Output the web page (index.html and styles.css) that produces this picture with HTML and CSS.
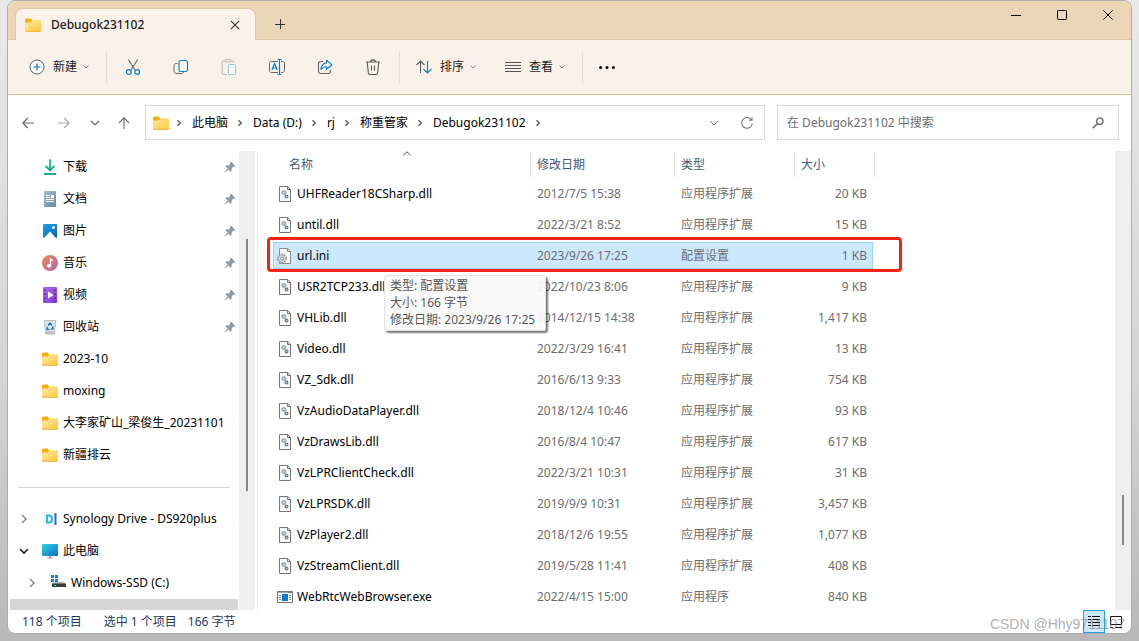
FILE: index.html
```html
<!DOCTYPE html>
<html lang="zh-CN">
<head>
<meta charset="utf-8">
<title>Debugok231102</title>
<link rel="stylesheet" href="styles.css">
</head>
<body>
<svg class="defs" aria-hidden="true">
  <defs>
    <linearGradient id="gFolder" x1="0" y1="0" x2="1" y2="1"><stop offset="0" stop-color="#ffe9a2"/><stop offset="1" stop-color="#ffc93f"/></linearGradient>
    <linearGradient id="gDown" x1="0" y1="0" x2="0" y2="1"><stop offset="0" stop-color="#35c887"/><stop offset="1" stop-color="#0f9f94"/></linearGradient>
    <linearGradient id="gDoc" x1="0" y1="0" x2="1" y2="1"><stop offset="0" stop-color="#a9bfd3"/><stop offset="1" stop-color="#68869f"/></linearGradient>
    <linearGradient id="gPic" x1="0" y1="0" x2="1" y2="1"><stop offset="0" stop-color="#16a3ea"/><stop offset="1" stop-color="#0a60b8"/></linearGradient>
    <linearGradient id="gMusic" x1="0" y1="0" x2="1" y2="1"><stop offset="0" stop-color="#ef8a57"/><stop offset="1" stop-color="#b562a6"/></linearGradient>
    <linearGradient id="gVideo" x1="0" y1="0" x2="1" y2="1"><stop offset="0" stop-color="#b06bf2"/><stop offset="1" stop-color="#8437dd"/></linearGradient>
    <linearGradient id="gPc" x1="0" y1="0" x2="1" y2="1"><stop offset="0" stop-color="#35d3e6"/><stop offset="1" stop-color="#0b6fc0"/></linearGradient>
  </defs>
  <symbol id="folder" viewBox="0 0 16 16"><path d="M0 3.200C0 2.200.6 1.500 1.500 1.500H5.500L7.500 3.500V6H0z" fill="#f5ab0c"/><path d="M0 5.500H5.300L7.200 3.300H15C15.700 3.300 16 3.700 16 4.300V13.200C16 14 15.600 14.500 14.800 14.500H1.200C.4 14.500 0 14 0 13.200z" fill="url(#gFolder)"/><path d="M.2 13.600Q.4 14.300 1.200 14.300H14.800Q15.600 14.300 15.800 13.600" fill="none" stroke="#e9a31c" stroke-width=".8"/></symbol>
  <symbol id="dll" viewBox="0 0 16 16"><path d="M2.500.5H10.500L13.500 3.500V15.500H2.500z" fill="#fafafa" stroke="#767676"/><path d="M10.500.5V3.500H13.500" fill="none" stroke="#767676"/><circle cx="6.800" cy="6.500" r="1.700" fill="#dfe5e9" stroke="#a3b0ba" stroke-width="1.800"/><circle cx="9.500" cy="10.500" r="1.300" fill="#fafafa" stroke="#71808c" stroke-width="1.500"/></symbol>
  <symbol id="ini" viewBox="0 0 16 16"><path d="M2.500.5H10.500L13.500 3.500V15.500H2.500z" fill="#f6f8fa" stroke="#8a8a8a"/><path d="M10.500.5V3.500H13.500" fill="none" stroke="#8a8a8a"/><circle cx="5" cy="10.500" r="4.300" fill="#e3e6e8" stroke="#8d9296" stroke-width="1.500" stroke-dasharray="1.700 1"/><circle cx="5" cy="10.500" r="3.400" fill="#dfe3e6" stroke="#9aa0a4" stroke-width=".7"/><circle cx="5" cy="10.500" r="1.500" fill="#fff" stroke="#858a8e"/></symbol>
  <symbol id="exe" viewBox="0 0 16 16"><path d="M.5 2.500H15.500V13.500H.5z" fill="#fff" stroke="#757575"/><path d="M1 3.500H15" stroke="#aaa"/><path d="M11.500 3.500H12.500M13.500 3.500H14.500" stroke="#444"/><path d="M5 5H11V12H5z" fill="#0a79d0"/><path d="M2 6.500H4M2 8.500H4M2 10.500H4M12 6.500H14M12 8.500H14M12 10.500H14" stroke="#8a9299"/></symbol>
  <symbol id="pin" viewBox="0 0 12 12"><path d="M7 .6 11.400 5 10.500 5.900 9.500 5.500 7.600 7.400 7.700 9.800 6.800 10.700 4.400 8.400 1 11.500.5 11 3.600 7.600 1.300 5.200 2.200 4.300 4.600 4.400 6.500 2.500 6.100 1.500z" fill="#8d9aa3"/></symbol>
  <symbol id="cd" viewBox="0 0 8 8"><path d="M1.500 2.500 4 5 6.500 2.500" fill="none" stroke="#8c867e"/></symbol>
  <symbol id="cr" viewBox="0 0 8 8"><path d="M2.500 1.200 5.300 4 2.500 6.800" fill="none" stroke="#5b5b5b" stroke-width="1.400"/></symbol>
  <symbol id="tree" viewBox="0 0 10 10"><path d="M3 1 7 5 3 9" fill="none" stroke="#8b8b8b" stroke-width="1.500"/></symbol>
</svg>

<div class="window">
  <header class="titlebar">
    <div class="tab">
      <svg class="i16"><use href="#folder"/></svg>
      <span class="tab-name">Debugok231102</span>
      <button class="plain" aria-label="关闭标签页"><svg class="i10" viewBox="0 0 10 10"><path d="M.8.8 9.200 9.200M9.200.8.8 9.200" stroke="#333" stroke-width="1.100"/></svg></button>
    </div>
    <button class="plain newtab" aria-label="新建标签页"><svg class="i10" viewBox="0 0 10 10"><path d="M0 5.500H10M5.500 0V10" stroke="#333"/></svg></button>
    <div class="winbtns">
      <button class="plain" aria-label="最小化"><svg class="i10" viewBox="0 0 10 10"><path d="M0 5.500H10" stroke="#000"/></svg></button>
      <button class="plain" aria-label="最大化"><svg class="i10" viewBox="0 0 10 10"><rect x=".5" y=".5" width="9" height="9" rx=".8" fill="none" stroke="#000"/></svg></button>
      <button class="plain" aria-label="关闭"><svg class="i10" viewBox="0 0 10 10"><path d="M.3.3 9.700 9.700M9.700.3.3 9.700" stroke="#000"/></svg></button>
    </div>
  </header>

  <div class="toolbar">
    <button class="tool"><svg class="i16" viewBox="0 0 16 16"><circle cx="8" cy="8" r="7" fill="#fcfaf7" stroke="#5a6068"/><path d="M4.500 8H11.500M8 4.500V11.500" stroke="#0a7bd4" stroke-width="1.200"/></svg>新建<svg class="i8"><use href="#cd"/></svg></button>
    <span class="sep"></span>
    <div class="icons">
      <button class="plain" aria-label="剪切"><svg class="i16" viewBox="0 0 16 16"><path d="M3.300.5 10 11M12.700.5 6 11" fill="none" stroke="#666" stroke-width="1.100"/><circle cx="3.800" cy="13" r="2.400" fill="none" stroke="#0a7bd4" stroke-width="1.200"/><circle cx="12.200" cy="13" r="2.400" fill="none" stroke="#0a7bd4" stroke-width="1.200"/></svg></button>
      <button class="plain" aria-label="复制"><svg class="i16" viewBox="0 0 16 16"><path d="M4.500 4.500H3C1.800 4.500 1 5.300 1 6.500V12C1 13.800 2.200 14.500 4 14.500H8.500C10 14.500 10.500 13.800 10.700 12.800" fill="none" stroke="#666"/><rect x="6" y="1.500" width="8.500" height="11" rx="1.800" fill="#fcfaf7" stroke="#0a7bd4" stroke-width="1.200"/></svg></button>
      <button class="plain" aria-label="粘贴"><svg class="i16" viewBox="0 0 16 16"><path d="M5 2H2.500C1.700 2 1.200 2.500 1.200 3.300V14C1.200 14.900 1.700 15.500 2.500 15.500H6M10 2H12C12.700 2 13 2.600 13 3.500" fill="none" stroke="#b9b5b0"/><rect x="4.500" y=".6" width="5.500" height="2.500" rx="1.200" fill="none" stroke="#b9b5b0"/><rect x="7.500" y="5.500" width="7" height="10" rx="1" fill="#fcfaf7" stroke="#92c2e6"/></svg></button>
      <button class="plain" aria-label="重命名"><svg class="i16" viewBox="0 0 16 16"><path d="M9 2.500H2.500C1.200 2.500.5 3.200.5 4.500V11.500C.5 12.800 1.200 13.500 2.500 13.500H9M12 2.500H13.500C14.800 2.500 15.500 3.200 15.500 4.500V11.500C15.500 12.800 14.800 13.500 13.500 13.500H12" fill="none" stroke="#666"/><path d="M8.500.5H12.500M8.500 15.500H12.500M10.500.5V15.500M3 11 5.600 4.500 8.200 11M3.900 9H7.300" fill="none" stroke="#0a7bd4" stroke-width="1.200"/></svg></button>
      <button class="plain" aria-label="共享"><svg class="i16" viewBox="0 0 16 16"><path d="M6 2.500H4C2.200 2.500 1.500 3.500 1.500 5V12C1.500 13.800 2.500 14.500 4 14.500H11C12.800 14.500 13.500 13.500 13.500 12V11" fill="none" stroke="#666" stroke-width="1.100"/><path d="M9.500 1.200 15 5.800 9.500 10.300V7.800C7 7.700 5.300 8.800 4 10.500 4.300 6.800 6.500 4.300 9.500 3.900z" fill="#fcfaf7" stroke="#0a7bd4" stroke-width="1.100" stroke-linejoin="round"/></svg></button>
      <button class="plain" aria-label="删除"><svg class="i16" viewBox="0 0 16 16"><path d="M.8 3H15.200M5.500 3C5.500.2 10.500.2 10.500 3M2.200 3.200 3.400 14C3.500 15 4.200 15.500 5 15.500H11C11.800 15.500 12.500 15 12.600 14L13.800 3.200M6.500 6.500V11.500M9.500 6.500V11.500" fill="none" stroke="#5a5a5a" stroke-width="1.100"/></svg></button>
    </div>
    <span class="sep"></span>
    <button class="tool"><svg class="i16" viewBox="0 0 16 16"><path d="M4.500 14V2.200M.5 6 4.500 2 8.500 6" fill="none" stroke="#5a5a5a" stroke-width="1.100"/><path d="M11.500 2V13.800M7.500 10 11.500 14 15.500 10" fill="none" stroke="#0a7bd4" stroke-width="1.100"/></svg>排序<svg class="i8"><use href="#cd"/></svg></button>
    <button class="tool"><svg class="i16" viewBox="0 0 16 16"><path d="M0 3.500H16M0 6.500H16M0 9.500H16M0 12.500H16" stroke="#555"/></svg>查看<svg class="i8"><use href="#cd"/></svg></button>
    <span class="sep"></span>
    <button class="plain more" aria-label="更多"><svg class="i16" viewBox="0 0 16 16"><circle cx="1.600" cy="8.500" r="1.500"/><circle cx="8" cy="8.500" r="1.500"/><circle cx="14.400" cy="8.500" r="1.500"/></svg></button>
  </div>

  <div class="navrow">
    <div class="arrows">
      <button class="plain" aria-label="后退"><svg viewBox="0 0 12 12"><path d="M12 6H.8M5.800 1 .8 6 5.800 11" fill="none" stroke="#666" stroke-width="1.100"/></svg></button>
      <button class="plain" aria-label="前进"><svg viewBox="0 0 12 12"><path d="M0 6H11.200M6.200 1 11.200 6 6.200 11" fill="none" stroke="#a5a5a5" stroke-width="1.100"/></svg></button>
      <button class="plain" aria-label="最近位置"><svg viewBox="0 0 12 12"><path d="M2 4 6 8 10 4" fill="none" stroke="#666" stroke-width="1.200"/></svg></button>
      <button class="plain" aria-label="向上"><svg viewBox="0 0 12 12"><path d="M6 12V.8M1 5.800 6 .8 11 5.800" fill="none" stroke="#666" stroke-width="1.100"/></svg></button>
    </div>
    <nav class="address">
      <svg class="i16"><use href="#folder"/></svg><svg class="i8"><use href="#cr"/></svg>
      <a href="#">此电脑</a><svg class="i8"><use href="#cr"/></svg>
      <a href="#">Data (D:)</a><svg class="i8"><use href="#cr"/></svg>
      <a href="#">rj</a><svg class="i8"><use href="#cr"/></svg>
      <a href="#">称重管家</a><svg class="i8"><use href="#cr"/></svg>
      <a href="#">Debugok231102</a><svg class="i8"><use href="#cr"/></svg>
      <button class="plain drop" aria-label="历史"><svg viewBox="0 0 12 12"><path d="M2 4 6 8 10 4" fill="none" stroke="#777"/></svg></button>
      <button class="plain refresh" aria-label="刷新"><svg viewBox="0 0 12 12"><path d="M10.500 3A5.300 5.300 0 1 0 11.300 6.500M11 .2V3.300H7.900" fill="none" stroke="#777" stroke-width="1.100"/></svg></button>
    </nav>
    <label class="search">
      <input type="text" placeholder="在 Debugok231102 中搜索" aria-label="搜索">
      <svg viewBox="0 0 12 12"><circle cx="7.800" cy="4.200" r="3.200" fill="none" stroke="#777" stroke-width="1.500"/><path d="M5.400 6.600.8 11.200" stroke="#777" stroke-width="1.800"/></svg>
    </label>
  </div>

  <div class="content">
    <aside class="side">
      <ul class="tree">
        <li><svg class="i16" viewBox="0 0 16 16"><path d="M8 .5V11M3.500 7 8 11.200 12.500 7" fill="none" stroke="url(#gDown)" stroke-width="1.800"/><path d="M7.200.5H8.800V10H7.200z" fill="#2fbf8a"/><path d="M2 14H14V16H2z" fill="#18aa8f"/></svg><span>下载</span><svg class="pin"><use href="#pin"/></svg></li>
        <li><svg class="i16" viewBox="0 0 16 16"><rect x="2" width="12" height="16" rx="1" fill="url(#gDoc)"/><path d="M4 4.500H8M4 6.500H8M4 8.500H12M4 10.500H12" stroke="#fff"/><path d="M9 4H12V7H9z" fill="#fff"/></svg><span>文档</span><svg class="pin"><use href="#pin"/></svg></li>
        <li><svg class="i16" viewBox="0 0 16 16"><rect x="1" y="1" width="14" height="14" rx="1" fill="url(#gPic)"/><path d="M2 15 8 8.500 14 15z" fill="#fff"/><circle cx="11.500" cy="4.500" r="1.500" fill="#fff"/></svg><span>图片</span><svg class="pin"><use href="#pin"/></svg></li>
        <li><svg class="i16" viewBox="0 0 16 16"><circle cx="8" cy="8" r="8" fill="url(#gMusic)"/><circle cx="7" cy="10.800" r="2" fill="#fff"/><path d="M8.500 11V4L11 5.500" fill="none" stroke="#fff" stroke-width="1.400"/></svg><span>音乐</span><svg class="pin"><use href="#pin"/></svg></li>
        <li><svg class="i16" viewBox="0 0 16 16"><rect x="1" y="0" width="14" height="16" rx="1" fill="url(#gVideo)"/><path d="M6 4.500 11.500 8 6 11.500z" fill="#fff"/><path d="M3 2.500V15M13 2.500V15" stroke="#43207d" stroke-width="1.500" stroke-dasharray="1.500 2.500"/></svg><span>视频</span><svg class="pin"><use href="#pin"/></svg></li>
        <li><svg class="i16" viewBox="0 0 16 16"><path d="M2.300 1.500H13.700L12.300 15H3.700z" fill="#e3e6e8" stroke="#b9bec2"/><path d="M3.500 12.500H12.500L12.200 15H3.800z" fill="#b9bcbf"/><path d="M6 6.500 8 4.200 10 6.500M10.500 7.500 11 9.500 8.800 10.500M7.300 10.500H5L5.400 7.800" fill="none" stroke="#0a7bd4" stroke-width="1.500"/></svg><span>回收站</span><svg class="pin"><use href="#pin"/></svg></li>
        <li><svg class="i16"><use href="#folder"/></svg><span>2023-10</span></li>
        <li><svg class="i16"><use href="#folder"/></svg><span>moxing</span></li>
        <li><svg class="i16"><use href="#folder"/></svg><span>大李家矿山_梁俊生_20231101</span></li>
        <li><svg class="i16"><use href="#folder"/></svg><span>新疆排云</span></li>
      </ul>
      <hr>
      <ul class="tree drives">
        <li><svg class="exp"><use href="#tree"/></svg><svg class="i16" viewBox="0 0 16 16"><path d="M1 1H13V15H1z" fill="#f3f5f8"/><path d="M5 4.500H7C11 4.500 11 11.500 7 11.500H5z" fill="none" stroke="#24b8e8" stroke-width="2"/><path d="M13.500 2V14" stroke="#2b6bd0" stroke-width="2"/></svg><span>Synology Drive - DS920plus</span></li>
        <li><svg class="exp" viewBox="0 0 10 10"><path d="M1 3 5 7 9 3" fill="none" stroke="#222" stroke-width="1.600"/></svg><svg class="i16" viewBox="0 0 16 16"><rect y="1" width="16" height="12" rx="1" fill="url(#gPc)"/><path d="M7 13H9V14.500H11V15.500H5V14.500H7z" fill="#9aa5ad"/></svg><span>此电脑</span></li>
        <li class="child"><svg class="exp"><use href="#tree"/></svg><svg class="i16" viewBox="0 0 16 16"><path d="M1 0H4V3H1zM5 0H8V3H5zM1 4H4V7H1zM5 4H8V7H5z" fill="#0a84d8"/><path d="M4 7H14L16 9H2z" fill="#b5b5b5"/><path d="M2 8.500H16V12H2z" fill="#3c3c3c"/><path d="M4 10H6V11H4z" fill="#4fe06a"/></svg><span>Windows-SSD (C:)</span></li>
      </ul>
      <div class="hscroll"></div>
    </aside>
    <div class="vscroll side-scroll"><i></i></div>

    <main class="files">
      <table>
        <colgroup><col class="c-name"><col class="c-date"><col class="c-type"><col class="c-size"></colgroup>
        <thead><tr><th>名称<svg class="sort" viewBox="0 0 8 5"><path d="M.3 4.500 4 .8 7.700 4.500" fill="none" stroke="#555"/></svg></th><th>修改日期</th><th>类型</th><th>大小</th></tr></thead>
        <tbody>
          <tr><td><svg class="i16"><use href="#dll"/></svg>UHFReader18CSharp.dll</td><td>2012/7/5 15:38</td><td>应用程序扩展</td><td>20 KB</td></tr>
          <tr><td><svg class="i16"><use href="#dll"/></svg>until.dll</td><td>2022/3/21 8:52</td><td>应用程序扩展</td><td>15 KB</td></tr>
          <tr class="selected"><td><svg class="i16"><use href="#ini"/></svg>url.ini<div class="marker"></div><div class="tip">类型: 配置设置<br>大小: 166 字节<br>修改日期: 2023/9/26 17:25</div></td><td>2023/9/26 17:25</td><td>配置设置</td><td>1 KB</td></tr>
          <tr><td><svg class="i16"><use href="#dll"/></svg>USR2TCP233.dll</td><td>2022/10/23 8:06</td><td>应用程序扩展</td><td>9 KB</td></tr>
          <tr><td><svg class="i16"><use href="#dll"/></svg>VHLib.dll</td><td>2014/12/15 14:38</td><td>应用程序扩展</td><td>1,417 KB</td></tr>
          <tr><td><svg class="i16"><use href="#dll"/></svg>Video.dll</td><td>2022/3/29 16:41</td><td>应用程序扩展</td><td>13 KB</td></tr>
          <tr><td><svg class="i16"><use href="#dll"/></svg>VZ_Sdk.dll</td><td>2016/6/13 9:33</td><td>应用程序扩展</td><td>754 KB</td></tr>
          <tr><td><svg class="i16"><use href="#dll"/></svg>VzAudioDataPlayer.dll</td><td>2018/12/4 10:46</td><td>应用程序扩展</td><td>93 KB</td></tr>
          <tr><td><svg class="i16"><use href="#dll"/></svg>VzDrawsLib.dll</td><td>2016/8/4 10:47</td><td>应用程序扩展</td><td>617 KB</td></tr>
          <tr><td><svg class="i16"><use href="#dll"/></svg>VzLPRClientCheck.dll</td><td>2022/3/21 10:31</td><td>应用程序扩展</td><td>31 KB</td></tr>
          <tr><td><svg class="i16"><use href="#dll"/></svg>VzLPRSDK.dll</td><td>2019/9/9 10:31</td><td>应用程序扩展</td><td>3,457 KB</td></tr>
          <tr><td><svg class="i16"><use href="#dll"/></svg>VzPlayer2.dll</td><td>2018/12/6 19:55</td><td>应用程序扩展</td><td>1,077 KB</td></tr>
          <tr><td><svg class="i16"><use href="#dll"/></svg>VzStreamClient.dll</td><td>2019/5/28 11:41</td><td>应用程序扩展</td><td>408 KB</td></tr>
          <tr><td><svg class="i16"><use href="#exe"/></svg>WebRtcWebBrowser.exe</td><td>2022/4/15 15:00</td><td>应用程序</td><td>840 KB</td></tr>
        </tbody>
      </table>
    </main>
    <div class="vscroll main-scroll"><i></i></div>
  </div>

  <footer class="status">
    <span>118 个项目</span><span class="chosen">选中 1 个项目</span><span>166 字节</span>
    <div class="views">
      <button class="plain on" aria-label="详细信息"><svg viewBox="0 0 12 12"><path d="M0 .5H12M0 3.500H12M0 6.500H12M0 9.500H12" stroke="#111" stroke-dasharray="3 1 8 0"/></svg></button>
      <button class="plain" aria-label="大图标"><svg viewBox="0 0 12 12"><path d="M.5.5H11.500V8.500H.5zM0 11.500H3M5 11.500H12" fill="none" stroke="#111"/></svg></button>
    </div>
  </footer>
  <div class="watermark">CSDN @Hhy9711107</div>
</div>
</body>
</html>
```
FILE: styles.css
```css
* { box-sizing: border-box; }

body {
  margin: 0;
  height: 100vh;
  padding: 0 7px 7px;
  background: linear-gradient(#e9e9e9, #d4d4d4 60%, #b8b8b8);
  font: 12px/16px "Noto Sans", "Noto Sans CJK SC", sans-serif;
  color: #1b1b1b;
}

.defs { position: absolute; width: 0; height: 0; }
svg { display: block; flex: none; }
.i16 { width: 16px; height: 16px; }
.i10 { width: 10px; height: 10px; }
.i8 { width: 8px; height: 8px; }

.plain, .tool {
  display: flex;
  align-items: center;
  justify-content: center;
  border: 0;
  padding: 0;
  background: none;
  font: inherit;
  color: inherit;
}

.window {
  position: relative;
  display: flex;
  flex-direction: column;
  height: 100%;
  background: #fff;
  border: 1px solid #acacac;
  border-radius: 8px;
  overflow: hidden;
}

/* title bar */
.titlebar {
  display: flex;
  height: 39px;
  padding-left: 7px;
  background: #ecd6b8;
  border-bottom: 1px solid #e0c8a5;
}
.tab {
  position: relative;
  display: flex;
  align-items: center;
  gap: 10px;
  width: 241px;
  height: 32px;
  margin-top: 7px;
  padding: 0 15px 0 9px;
  background: #faf2e9;
  border: 1px solid #e0c8a5;
  border-bottom: 0;
  border-radius: 8px 8px 0 0;
}
.tab-name { flex: 1; font-weight: 500; }
.newtab { width: 48px; padding-top: 8px; }
.winbtns { display: flex; height: 28px; margin-left: auto; }
.winbtns button { width: 46px; }

/* command bar */
.toolbar {
  display: flex;
  align-items: center;
  height: 55px;
  padding-left: 21px;
  background: #faf2e9;
  border-bottom: 1px solid #dcc4a0;
}
.tool { gap: 8px; }
.tool .i8 { margin-left: -3px; }
.sep { width: 1px; height: 31px; margin: 0 16px; background: #e4dfd6; }
.icons { display: flex; gap: 32px; padding: 0 2px; }
.tool + .tool { margin-left: 28px; }

/* address row */
.navrow {
  display: flex;
  align-items: center;
  height: 55px;
  padding-right: 12px;
}
.arrows {
  display: grid;
  grid-template-columns: 39px 33px 29px 29px;
  width: 137px;
}
.arrows svg { width: 12px; height: 12px; }
.address {
  display: flex;
  align-items: center;
  flex: 1 1 620px;
  height: 35px;
  padding: 0 11px 0 7px;
  border: 1px solid #d9d9d9;
}
.address .i8 { margin: 0 9px 0 8px; }
.address .i16 + .i8 { margin-left: 6px; }
.address a { color: #000; text-decoration: none; }
.drop { margin-left: auto; }
.drop svg { width: 12px; height: 12px; }
.refresh { margin-left: 21px; }
.refresh svg { width: 12px; height: 12px; }
.search {
  display: flex;
  align-items: center;
  flex: 1 1 342px;
  height: 35px;
  margin-left: 12px;
  padding: 0 14px 0 9px;
  border: 1px solid #d9d9d9;
}
.search input {
  flex: 1;
  min-width: 0;
  border: 0;
  padding: 0;
  outline: 0;
  font: inherit;
}
.search input::placeholder { color: #6d6d6d; opacity: 1; }
.search svg { width: 12px; height: 12px; }

/* panes */
.content { display: flex; flex: 1; min-height: 0; padding-top: 1px; }
.side { display: flex; flex-direction: column; width: 231px; color: #000; }
.tree { list-style: none; margin: 0; padding: 0 3px 0 34px; }
.tree li { display: flex; align-items: center; gap: 5px; height: 32px; white-space: nowrap; }
.pin { width: 12px; height: 12px; margin-left: auto; }
.side hr { width: 212px; height: 1px; margin: 16px 0 15px 10px; border: 0; background: #d4d4d4; }
.drives { padding-left: 11px; flex: 1; min-height: 0; overflow: hidden; }
.drives .exp { width: 10px; height: 10px; margin-right: 8px; }
.drives .child { padding-left: 8px; }
.hscroll { height: 11px; margin: 0 1px 0 2px; background: #d6d6d6; border-radius: 2px 2px 0 0; }

.vscroll { width: 16px; background: #efefef; }
.vscroll i { display: block; width: 2px; background: #868686; }
.side-scroll { padding: 88px 0 0 7px; }
.side-scroll i { height: 252px; }
.main-scroll { padding: 344px 0 0 7px; }
.main-scroll i { height: 50px; }

.files { flex: 1; min-width: 0; margin-left: 2px; padding-left: 15px; border-left: 1px solid #ececec; }
.files table { border-collapse: separate; border-spacing: 0; table-layout: fixed; width: 602px; }
.c-name { width: 258px; }
.c-date { width: 144px; }
.c-type { width: 120px; }
.c-size { width: 80px; }
.files th {
  position: relative;
  height: 27px;
  padding: 0 6px;
  border-right: 1px solid #e3e3e3;
  font-weight: 400;
  text-align: left;
  color: #44597a;
}
.files th:first-child { padding-left: 16px; }
.sort { position: absolute; left: 130px; top: 0; width: 8px; height: 5px; }
.files td { height: 31px; padding: 0 6px; color: #6d6d6d; white-space: nowrap; }
.files td:first-child { position: relative; padding-left: 4px; color: #000; }
.files td:last-child { text-align: right; padding-right: 8px; }
.files td .i16 { float: left; margin-right: 4px; }

.selected { position: relative; z-index: 1; }
.selected td:first-child::before {
  content: "";
  position: absolute;
  left: 0;
  top: 2px;
  bottom: 2px;
  width: 598px;
  z-index: -1;
  background: #cce8ff;
  border: 1px solid #99d1ff;
}
.marker {
  position: absolute;
  left: -6px;
  top: -3px;
  width: 635px;
  height: 35px;
  border: 3px solid #f52314;
  border-radius: 4px;
}
.files .tip {
  position: absolute;
  left: 111px;
  top: 35px;
  width: 162px;
  padding: 1px 5px 2px;
  line-height: 17px;
  color: #575757;
  background: #f9f9f9ee;
  border: 1px solid #e2e2e2;
  border-radius: 3px;
  box-shadow: 2px 2px 2px #0008;
}

/* status bar */
.status { display: flex; align-items: center; height: 23px; padding: 0 4px 0 14px; color: #1e395b; }
.chosen { margin: 0 11px 0 22px; }
.views { display: flex; margin-left: auto; }
.views button { width: 22px; height: 23px; }
.views svg { width: 12px; height: 12px; }
.views .on { background: #cce8f8; border: 1px solid #26a0da; }

.watermark {
  position: absolute;
  right: 6px;
  bottom: 0;
  font: 14px/18px "Liberation Sans", sans-serif;
  color: #7777779c;
}
```
